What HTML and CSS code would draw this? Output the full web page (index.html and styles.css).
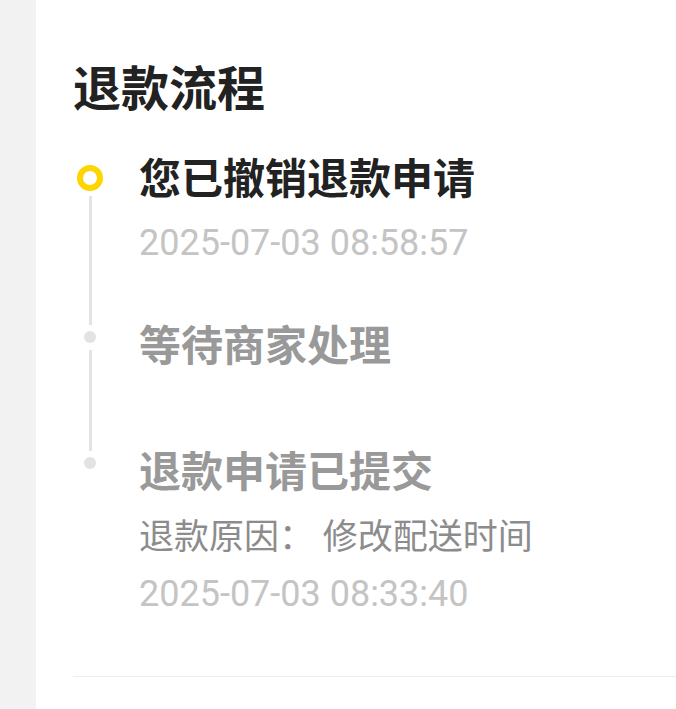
FILE: index.html
```html
<!DOCTYPE html>
<html lang="zh-CN">
<head>
    <meta charset="UTF-8">
    <meta name="viewport" content="width=device-width, initial-scale=1.0">
    <title>退款流程</title>
    <link rel="stylesheet" href="styles.css">
</head>
<body>

    <div class="page">
        <aside class="side"></aside>

        <main class="card">
            <h1 class="card-title">退款流程</h1>

            <ul class="steps">
                <li class="step step-current">
                    <div class="axis">
                        <span class="ring"></span>
                        <span class="line"></span>
                    </div>
                    <div class="step-body">
                        <h3 class="step-title">您已撤销退款申请</h3>
                        <p class="step-time">2025-07-03 08:58:57</p>
                    </div>
                </li>
                <li class="step step-waiting">
                    <div class="axis">
                        <span class="dot"></span>
                        <span class="line"></span>
                    </div>
                    <div class="step-body">
                        <h3 class="step-title">等待商家处理</h3>
                    </div>
                </li>
                <li class="step step-last">
                    <div class="axis">
                        <span class="dot"></span>
                    </div>
                    <div class="step-body">
                        <h3 class="step-title">退款申请已提交</h3>
                        <p class="step-desc">退款原因：&nbsp;修改配送时间</p>
                        <p class="step-time">2025-07-03 08:33:40</p>
                    </div>
                </li>
            </ul>

            <div class="divider"></div>
        </main>
    </div>

</body>
</html>
```

FILE: styles.css
```css
body {
    margin: 0;
    padding: 0;
    background-color: #f2f2f2;
    font-family: Roboto, "Noto Sans CJK SC", sans-serif;
}
.page {
    display: flex;
    min-height: 709px;
}
.side {
    width: 36px;
    flex-shrink: 0;
}
.card {
    flex: 1;
    background-color: #fff;
    padding: 58px 0 0 37px;
}
.card-title {
    margin: 0;
    font-size: 48px;
    line-height: 64px;
    font-weight: 700;
    color: #222;
}
.steps {
    list-style: none;
    margin: 28px 0 0 0;
    padding: 0;
}
.step {
    display: flex;
}
.axis {
    width: 34px;
    margin-right: 32px;
    display: flex;
    flex-direction: column;
    align-items: center;
    flex-shrink: 0;
}
.ring {
    width: 26px;
    height: 26px;
    margin-top: 15px;
    box-sizing: border-box;
    border: 6px solid #ffd500;
    border-radius: 50%;
    background-color: #fff;
}
.dot {
    width: 12px;
    height: 12px;
    margin-top: 14px;
    border-radius: 50%;
    background-color: #e3e3e3;
}
.line {
    flex: 1;
    width: 3px;
    background-color: #e3e3e3;
    margin-bottom: -8px;
}
.step-current .line {
    margin-top: 5px;
}
.step-waiting .line {
    margin-top: 7px;
}
.step-body p {
    margin: 0;
}
.step-title {
    margin: 0;
    font-size: 42px;
    line-height: 60px;
    font-weight: 700;
    color: #999;
}
.step-current .step-title {
    color: #222;
}
.step-current .step-body {
    padding-bottom: 46px;
}
.step-waiting .step-body {
    padding-bottom: 66px;
}
.step-time {
    font-size: 36px;
    line-height: 56px;
    color: #c4c4c4;
}
.step-current .step-time {
    margin-top: 5px !important;
}
.step-desc {
    margin-top: 7px !important;
    font-size: 35px;
    line-height: 56px;
    color: #8c8c8c;
}
.divider {
    height: 1px;
    background-color: #eeeeee;
    margin-top: 54px;
}
```
